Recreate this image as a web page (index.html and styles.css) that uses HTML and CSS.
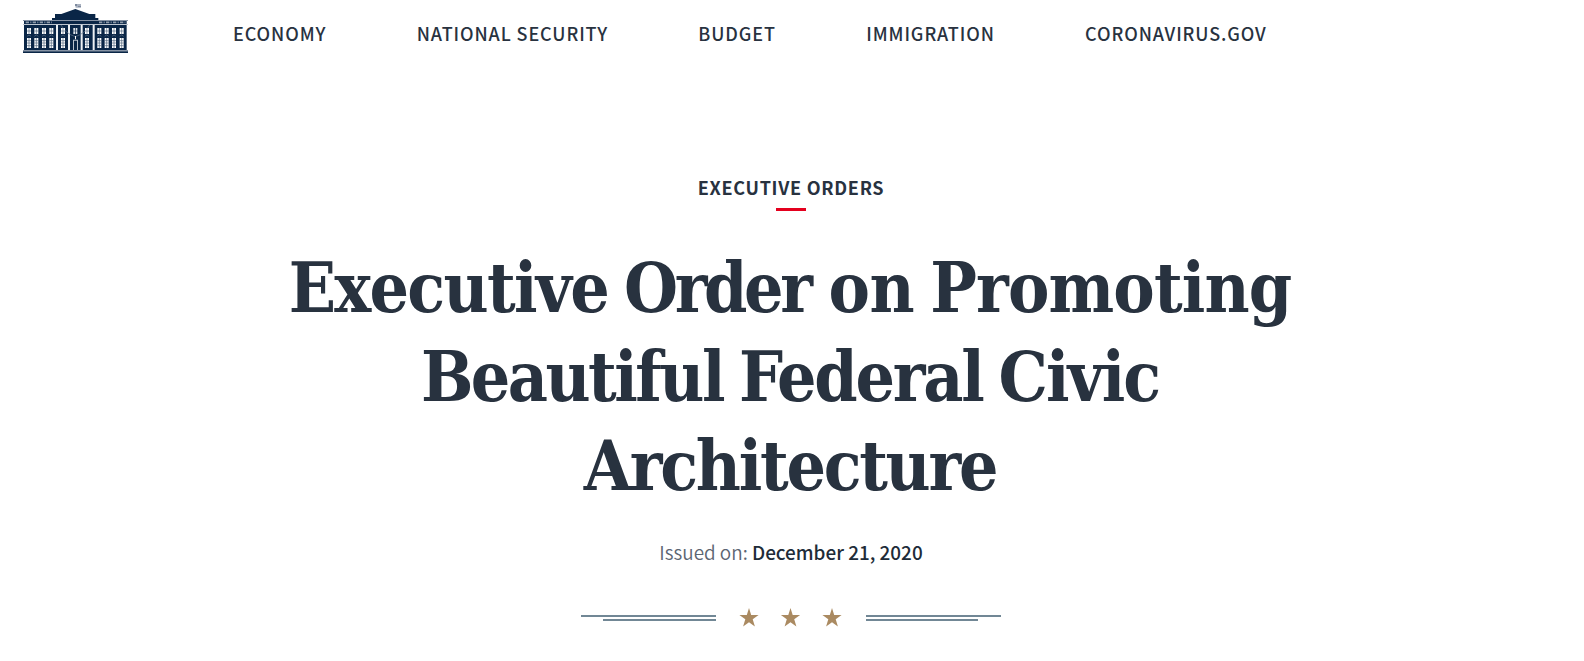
FILE: index.html
```
<!DOCTYPE html>
<html lang="en">
<head>
<meta charset="utf-8">
<title>Executive Order on Promoting Beautiful Federal Civic Architecture</title>
<link rel="stylesheet" href="styles.css">
</head>
<body>
<header class="site-header">
  <a class="logo" aria-label="The White House">
    <svg viewBox="24 12 315 147" width="105" height="49">
      <defs>
        <g id="window">
          <path fill="#fff" d="M0 84h12v18H0zM0 114h12v30H0z"/>
          <path stroke="#52667f" stroke-width="2" fill="none" d="M6 84v18M0 93h12M6 114v30M0 122h12M0 129h12M0 137h12"/>
          <path stroke="#60748a" stroke-width="2" fill="none" d="M0 109l6-4 6 4"/>
        </g>
      </defs>
      <path fill="#a9b1bf" d="M180 12h18v11h-16z"/>
      <path fill="#7d8a9e" d="M180 12h6v6h-6zM189 18h9v3h-9z"/>
      <path fill="#0a2647" d="M181 27l42 15h18v12h9v6h85v93H27V60h84v-6h9V42h19z"/>
      <path fill="#0a2647" d="M24 154h315v5H24z"/>
      <path fill="#8793a4" d="M24 150h315v3H24zM24 60h315v3H24z"/>
      <path fill="#bdc5cf" d="M24 72h315v3H24z"/>
      <path stroke="#8d9aaa" stroke-width="5" stroke-dasharray="10 4 3 4" d="M32 67h79M252 67h79"/>
      <path fill="#eef1f4" d="M123 75h6v75h-6zM159 75h6v75h-6zM197 75h6v75h-6zM233 75h6v75h-6z"/>
      <path fill="none" stroke="#60748a" stroke-width="2" d="M138 75q14 26 43 35q29-9 43-35"/>
      <use href="#window" x="36"/><use href="#window" x="58"/><use href="#window" x="81"/><use href="#window" x="103"/>
      <use href="#window" x="138"/><use href="#window" x="210"/>
      <use href="#window" x="247"/><use href="#window" x="269"/><use href="#window" x="291"/><use href="#window" x="314"/>
      <path fill="#dfe4ea" d="M175 84h5v8h-5zM182 84h5v8h-5zM175 94h5v8h-5zM182 94h5v8h-5z"/>
      <path fill="#b9c2cd" d="M174 121h3v29h-3zM186 121h3v29h-3zM174 119h15v3h-15z"/>
      <path fill="#fff" d="M180 108h3v10h-3z"/>
    </svg>
  </a>
  <nav class="nav">
    <a>ECONOMY</a><a>NATIONAL SECURITY</a><a>BUDGET</a><a>IMMIGRATION</a><a>CORONAVIRUS.GOV</a>
  </nav>
</header>
<main class="hero">
  <p class="category">EXECUTIVE ORDERS</p>
  <h1 class="title">
    <span class="line"><span class="snug">Executive</span> <span class="tightest">Order</span> <span class="open">on</span> <span class="loose">Promoting</span></span>
    <span class="line"><span class="tighter">Beautiful</span> <span class="tight">Federal</span> Civic</span>
    <span class="line"><span class="tight">Architecture</span></span>
  </h1>
  <p class="issued">Issued on: <time>December 21, 2020</time></p>
  <div class="divider">
    <span class="rule rule-left"></span>
    <svg class="stars" viewBox="0 0 101 18" width="101" height="18">
      <defs><path id="star" d="M9 -1l2.2 7h7.4l-5.9 4.3 2.2 7.3L9 13.2l-5.9 4.4 2.2-7.3L-0.6 6h7.4z"/></defs>
      <use href="#star"/><use href="#star" x="41.5"/><use href="#star" x="83"/>
    </svg>
    <span class="rule rule-right"></span>
  </div>
</main>
</body>
</html>
```
FILE: styles.css
```
body {
  margin: 0;
  background: #fff;
  color: #28323f;
  font-family: "Noto Sans CJK SC", "Noto Sans", sans-serif;
}
.site-header {
  display: flex;
  align-items: flex-start;
  height: 69px;
}
.logo { margin: 4px 0 0 23px; width: 105px; height: 49px; }
.logo svg { display: block; }
.nav {
  display: flex;
  gap: 90.3px;
  margin-left: 105px;
  padding-top: 19px;
  font-size: 18px;
  font-weight: 500;
  line-height: 28px;
  letter-spacing: 0.9px;
  white-space: nowrap;
}
.hero {
  display: flex;
  flex-direction: column;
  align-items: center;
  width: 1582px;
}
.category {
  display: flex;
  flex-direction: column;
  align-items: center;
  margin: 104px 0 0;
  font-size: 18px;
  font-weight: 700;
  line-height: 28px;
  letter-spacing: 0.72px;
}
.category::after {
  content: "";
  width: 30px;
  height: 3px;
  margin-top: 7px;
  background: #e4001e;
}
.title {
  display: flex;
  flex-direction: column;
  align-items: center;
  margin: 32px 2px 0 0;
  font-family: "DejaVu Serif Condensed", "DejaVu Serif", serif;
  font-stretch: condensed;
  font-size: 69px;
  font-weight: 700;
  line-height: 89px;
  letter-spacing: -2px;
  word-spacing: -3.5px;
  white-space: nowrap;
}
.open { letter-spacing: -0.5px; }
.loose { letter-spacing: -0.85px; }
.snug { letter-spacing: -1.7px; }
.tight { letter-spacing: -2.25px; }
.tighter { letter-spacing: -2.55px; }
.tightest { margin-right: 3px; letter-spacing: -3.4px; }
.issued {
  margin: 27px 0 0;
  color: #5c6572;
  font-size: 18.9px;
  font-weight: 350;
  line-height: 30px;
}
.issued time { color: #202b38; font-weight: 500; }
.divider {
  display: flex;
  align-items: flex-start;
  margin-top: 42px;
}
.rule {
  width: 135px;
  height: 2px;
  margin-top: 6px;
  background: #718795;
}
.rule::after {
  content: "";
  display: block;
  width: 113px;
  height: 2px;
  background: #718795;
  transform: translateY(4px);
}
.rule-left::after { margin-left: 22px; }
.rule-right::after { width: 112px; }
.stars { overflow: visible; margin: 0 25px 0 24px; fill: #aa8a61; }
```
